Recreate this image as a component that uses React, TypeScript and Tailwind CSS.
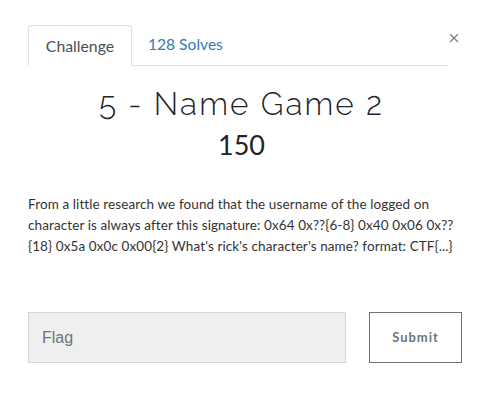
import { X } from "lucide-react"

export default function App() {
  return (
    <div className="w-[483px] h-[400px] bg-white text-[#212529] font-['Lato',sans-serif] relative">
      <button className="absolute left-[447px] top-[31px] text-[#7a7f85]">
        <X size={14} strokeWidth={2.25} />
      </button>

      <div className="pt-[25px] pl-[28px] pr-[35px]">
        <div className="flex border-b border-[#dee2e6] h-[41px]">
          <div className="w-[104px] -mb-px border border-b-white border-[#dee2e6] rounded-t-[4px] flex items-center justify-center text-[15.8px] text-[#495057] bg-white">
            Challenge
          </div>
          <div className="px-4 flex items-center text-[15.6px] text-[#337ab7]">128 Solves</div>
        </div>
      </div>

      <div className="text-center mt-[20px]">
        <h2 className="text-[31.5px] font-light leading-[36px] tracking-[2.1px] font-['Raleway','Lato',sans-serif]">
          5 - Name Game 2
        </h2>
        <h3 className="text-[27px] leading-[34px] mt-[6px]">150</h3>
      </div>

      <div className="pl-[28px] pr-[20px] mt-[32px] text-[13.5px] tracking-[0.1px] leading-[21px] text-[#333]">
        From a little research we found that the username of the logged on character is always after
        this signature: 0x64 0x??{"{6-8}"} 0x40 0x06 0x??{"{18}"} 0x5a 0x0c 0x00{"{2}"} What's rick's
        character's name? format: CTF{"{...}"}
      </div>

      <div className="flex pl-[28px] mt-[55px] gap-[23px]">
        <input
          placeholder="Flag"
          className="shrink-0 w-[318px] h-[51px] bg-[#efefef] border border-[#d2d6dc] px-[13px] text-[16px] font-['Liberation_Sans',sans-serif] placeholder:text-[#6c757d] outline-none"
        />
        <button className="shrink-0 w-[93px] h-[51px] border border-[#6c757d] text-[13px] font-bold tracking-[1px] text-[#6c757d]">
          Submit
        </button>
      </div>
    </div>
  )
}
